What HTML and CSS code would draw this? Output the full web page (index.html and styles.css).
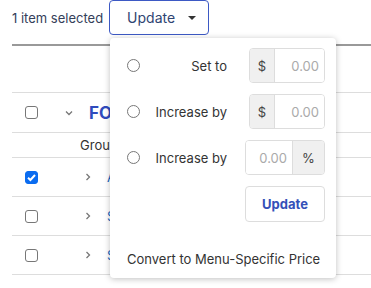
FILE: index.html
```html
<!DOCTYPE html>
<html lang="en">
<head>
    <meta charset="UTF-8">
    <meta name="viewport" content="width=device-width, initial-scale=1.0">
    <title>Bulk Update</title>
    <link rel="stylesheet" href="styles.css">
</head>
<body>
    <div class="page">
        <div class="toolbar">
            <span class="selected-count">1 item selected</span>
            <button class="update-toggle">Update <span class="caret"></span></button>
        </div>

        <div class="table">
            <div class="table-head"></div>

            <div class="group-row">
                <span class="cell-check"><span class="checkbox"></span></span>
                <span class="chevron down">
                    <svg width="10" height="10" viewBox="0 0 10 10"><path d="M2 3.5 L5 6.5 L8 3.5" fill="none" stroke="#777" stroke-width="1.3"/></svg>
                </span>
                <span class="group-name">FOOD</span>
            </div>
            <div class="sub-head">
                <span class="sub-label">Group</span>
            </div>

            <div class="item-row">
                <span class="cell-check"><span class="checkbox checked">
                    <svg width="13" height="13" viewBox="0 0 13 13"><path d="M3 6.8 L5.4 9 L10 4" fill="none" stroke="#fff" stroke-width="2"/></svg>
                </span></span>
                <span class="chevron">
                    <svg width="10" height="10" viewBox="0 0 10 10"><path d="M3.5 2 L6.5 5 L3.5 8" fill="none" stroke="#777" stroke-width="1.3"/></svg>
                </span>
                <span class="item-name">Apple Pie</span>
            </div>
            <div class="item-row">
                <span class="cell-check"><span class="checkbox"></span></span>
                <span class="chevron">
                    <svg width="10" height="10" viewBox="0 0 10 10"><path d="M3.5 2 L6.5 5 L3.5 8" fill="none" stroke="#777" stroke-width="1.3"/></svg>
                </span>
                <span class="item-name">Salad</span>
            </div>
            <div class="item-row">
                <span class="cell-check"><span class="checkbox"></span></span>
                <span class="chevron">
                    <svg width="10" height="10" viewBox="0 0 10 10"><path d="M3.5 2 L6.5 5 L3.5 8" fill="none" stroke="#777" stroke-width="1.3"/></svg>
                </span>
                <span class="item-name">Soup</span>
            </div>
            <div class="group-row last">
                <span class="cell-check"><span class="checkbox"></span></span>
                <span class="chevron"></span>
                <span class="group-name">DRINKS</span>
            </div>
        </div>

        <div class="popover">
            <div class="option-row">
                <span class="radio"></span>
                <span class="option-label">Set to</span>
                <div class="input-group narrow">
                    <span class="addon">$</span>
                    <input class="amount" type="text" placeholder="0.00">
                </div>
            </div>
            <div class="option-row">
                <span class="radio"></span>
                <span class="option-label">Increase by</span>
                <div class="input-group narrow">
                    <span class="addon">$</span>
                    <input class="amount" type="text" placeholder="0.00">
                </div>
            </div>
            <div class="option-row">
                <span class="radio"></span>
                <span class="option-label">Increase by</span>
                <div class="input-group">
                    <input class="amount" type="text" placeholder="0.00">
                    <span class="addon wide">%</span>
                </div>
            </div>
            <div class="action-row">
                <button class="apply-button">Update</button>
            </div>
            <div class="convert-link">Convert to Menu-Specific Price</div>
        </div>
    </div>
</body>
</html>
```

FILE: styles.css
```css
body {
    margin: 0;
    padding: 0;
    background-color: #fff;
    font-family: Inter, "Noto Sans", Arial, sans-serif;
    font-size: 13px;
    color: #333;
}
.page {
    position: relative;
    padding: 0 0 0 12px;
    overflow: hidden;
    height: 288px;
}
.toolbar {
    display: flex;
    align-items: center;
    gap: 6px;
    height: 35px;
}
.selected-count {
    font-size: 13px;
    color: #34405a;
}
.update-toggle {
    display: flex;
    align-items: center;
    height: 35px;
    width: 100px;
    padding: 0 0 0 17px;
    border: 1px solid #3d59c4;
    border-radius: 4px;
    background-color: #fff;
    color: #2f4472;
    font-family: inherit;
    font-size: 14px;
    box-sizing: border-box;
}
.caret {
    margin-left: 13px;
    border-left: 4px solid transparent;
    border-right: 4px solid transparent;
    border-top: 4px solid #333;
}
.table {
    margin-top: 9px;
    border-top: 2px solid #999;
}
.table-head {
    height: 46px;
    border-bottom: 1px solid #ddd;
}
.group-row, .item-row {
    display: flex;
    align-items: center;
    border-bottom: 1px solid #ddd;
}
.group-row {
    height: 39px;
}
.item-row {
    height: 38px;
}
.cell-check {
    width: 38px;
    display: flex;
    justify-content: center;
}
.checkbox {
    width: 13px;
    height: 13px;
    border: 1px solid #777;
    border-radius: 3px;
    box-sizing: border-box;
    display: flex;
}
.checkbox.checked {
    background-color: #0b6cf0;
    border-color: #0b6cf0;
}
.checkbox.checked svg {
    margin: -1px;
}
.chevron {
    width: 10px;
    height: 10px;
    margin-left: 14px;
    display: flex;
}
.item-row .chevron {
    margin-left: 33px;
}
.group-name {
    margin-left: 15px;
    font-size: 17px;
    font-weight: 700;
    color: #2f4bbd;
}
.item-name {
    margin-left: 14px;
    color: #1565c0;
}
.group-row.last .group-name {
    margin-left: 39px;
}
.sub-head {
    height: 24px;
    display: flex;
    align-items: center;
    border-bottom: 1px solid #ddd;
}
.sub-label {
    margin-left: 68px;
    color: #333;
}
.popover {
    position: absolute;
    left: 110px;
    top: 38px;
    width: 226px;
    height: 240px;
    box-sizing: border-box;
    padding: 10px 11px 0 17px;
    background-color: #fff;
    border-radius: 4px;
    box-shadow: 0 1px 6px rgba(0, 0, 0, 0.25);
}
.option-row {
    display: flex;
    align-items: center;
    height: 35px;
    margin-bottom: 11px;
}
.radio {
    flex-shrink: 0;
    width: 13px;
    height: 13px;
    border: 1px solid #777;
    border-radius: 50%;
    box-sizing: border-box;
}
.option-label {
    flex-shrink: 0;
    width: 72px;
    margin-left: 15px;
    text-align: right;
    white-space: nowrap;
    color: #333;
}
.input-group {
    display: flex;
    margin-left: auto;
    width: 80px;
    height: 35px;
    border: 1px solid #ddd;
    border-radius: 4px;
    box-sizing: border-box;
    overflow: hidden;
}
.input-group.narrow {
    width: 76px;
}
.addon {
    width: 24px;
    display: flex;
    align-items: center;
    justify-content: center;
    background-color: #f0f0f0;
    border-right: 1px solid #ddd;
    color: #444;
}
.addon.wide {
    width: 31px;
    border-right: none;
    border-left: 1px solid #ddd;
}
.amount {
    flex: 1;
    min-width: 0;
    border: none;
    padding: 0 5px 0 0;
    text-align: right;
    font-family: inherit;
    font-size: 13px;
    outline: none;
}
.amount::placeholder {
    color: #aaa;
}
.action-row {
    display: flex;
    justify-content: flex-end;
}
.apply-button {
    width: 80px;
    height: 36px;
    background-color: #fff;
    border: 1px solid #ddd;
    border-radius: 4px;
    color: #3450b8;
    font-family: inherit;
    font-size: 13px;
    font-weight: 700;
}
.convert-link {
    margin-top: 29px;
    color: #333;
}
```
